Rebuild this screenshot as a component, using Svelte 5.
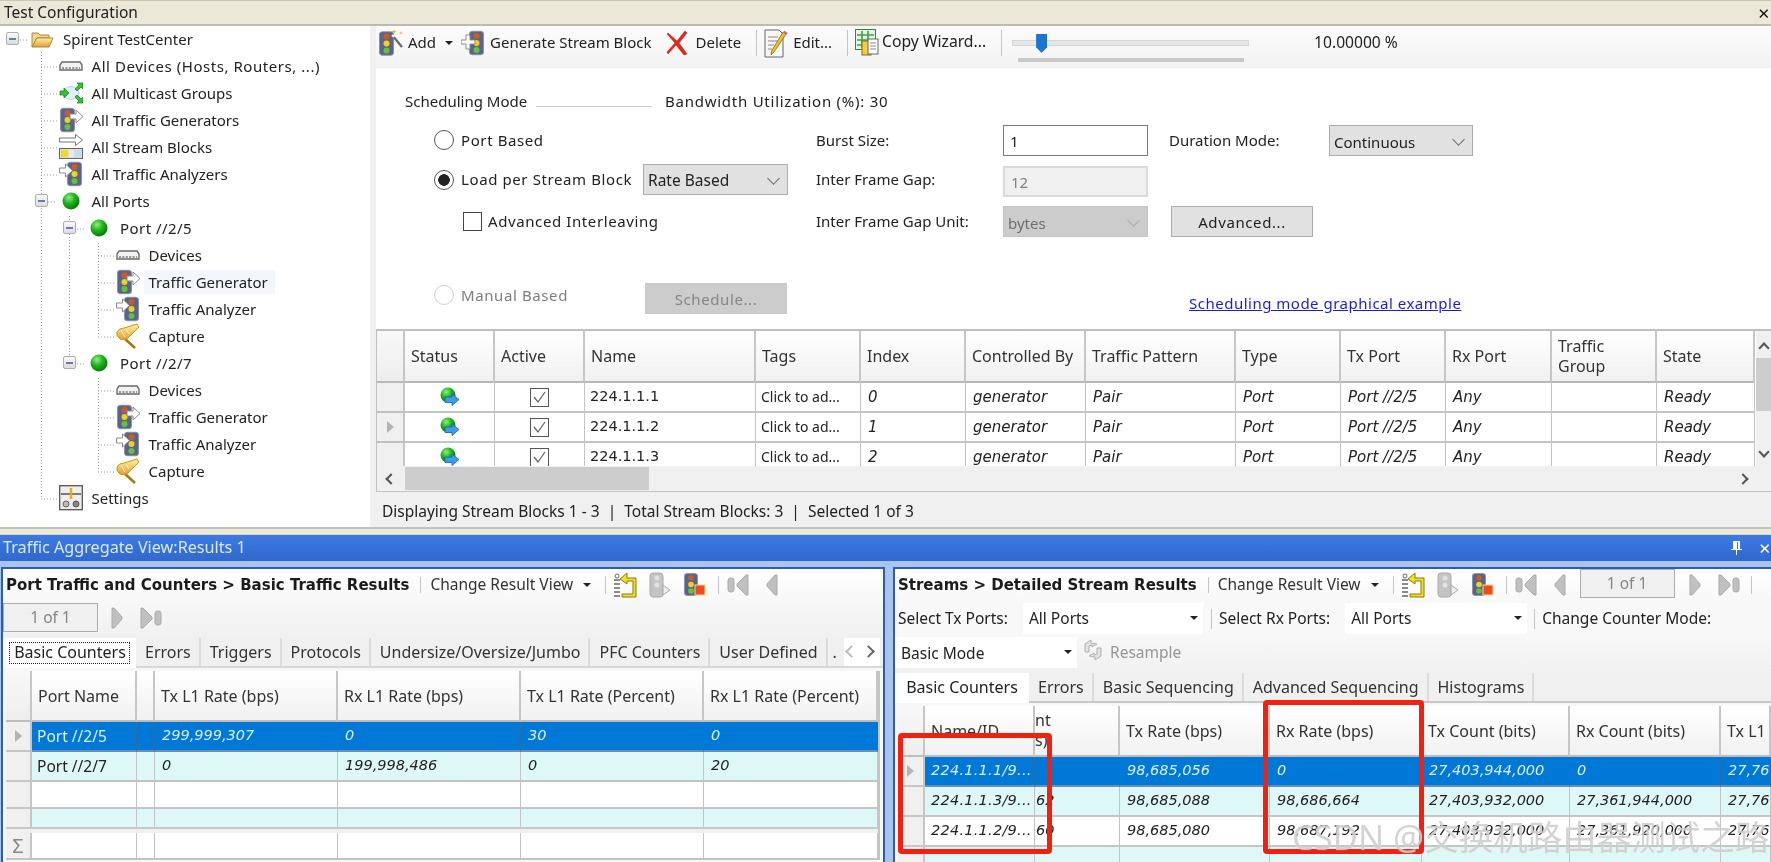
<script>
  const tree = [
    { l: 0, t: 'Spirent TestCenter', i: 'folder', x: true },
    { l: 1, t: 'All Devices (Hosts, Routers, ...)', i: 'device', wide: true },
    { l: 1, t: 'All Multicast Groups', i: 'multicast' },
    { l: 1, t: 'All Traffic Generators', i: 'gen' },
    { l: 1, t: 'All Stream Blocks', i: 'stream' },
    { l: 1, t: 'All Traffic Analyzers', i: 'ana' },
    { l: 1, t: 'All Ports', i: 'ball', x: true },
    { l: 2, t: 'Port //2/5', i: 'ball', x: true, port: true },
    { l: 3, t: 'Devices', i: 'device' },
    { l: 3, t: 'Traffic Generator', i: 'gen', hover: true },
    { l: 3, t: 'Traffic Analyzer', i: 'ana' },
    { l: 3, t: 'Capture', i: 'capture' },
    { l: 2, t: 'Port //2/7', i: 'ball', x: true, port: true },
    { l: 3, t: 'Devices', i: 'device' },
    { l: 3, t: 'Traffic Generator', i: 'gen' },
    { l: 3, t: 'Traffic Analyzer', i: 'ana' },
    { l: 3, t: 'Capture', i: 'capture' },
    { l: 1, t: 'Settings', i: 'settings' }
  ];
  const rowCenter = (n) => 13.5 + 27 * n;
  const hLines = [[41, 58, 1], [41, 58, 2], [41, 58, 3], [41, 58, 4], [41, 58, 5], [41, 58, 17],
    [98, 115, 8], [98, 115, 9], [98, 115, 10], [98, 115, 11], [98, 115, 13], [98, 115, 14], [98, 115, 15], [98, 115, 16]];
  const vLines = [[41, 26, rowCenter(17)], [69, 187, 338], [98, 214, rowCenter(11)], [98, 349, rowCenter(16)]];

  const blocks = [
    ['224.1.1.1', '0', false],
    ['224.1.1.2', '1', true],
    ['224.1.1.3', '2', false]
  ];
  const topHeads = ['Status', 'Active', 'Name', 'Tags', 'Index', 'Controlled By', 'Traffic Pattern', 'Type', 'Tx Port', 'Rx Port', 'Traffic Group', 'State'];

  const leftHeads = ['Port Name', '', 'Tx L1 Rate (bps)', 'Rx L1 Rate (bps)', 'Tx L1 Rate (Percent)', 'Rx L1 Rate (Percent)'];
  const leftRows = [
    { c: ['Port //2/5', '', '299,999,307', '0', '30', '0'], k: 'sel' },
    { c: ['Port //2/7', '', '0', '199,998,486', '0', '20'], k: 'alt' },
    { c: ['', '', '', '', '', ''], k: 'plain short' },
    { c: ['', '', '', '', '', ''], k: 'alt clip' }
  ];
  const rightHeads = ['Name/ID', '', 'Tx Rate (bps)', 'Rx Rate (bps)', 'Tx Count (bits)', 'Rx Count (bits)', 'Tx L1'];
  const rightRows = [
    { c: ['224.1.1.1/9...', '', '98,685,056', '0', '27,403,944,000', '0', '27,76'], k: 'sel' },
    { c: ['224.1.1.3/9...', '62', '98,685,088', '98,686,664', '27,403,932,000', '27,361,944,000', '27,76'], k: 'alt' },
    { c: ['224.1.1.2/9...', '60', '98,685,080', '98,687,192', '27,403,932,000', '27,361,920,000', '27,76'], k: 'plain' },
    { c: ['', '', '', '', '', '', ''], k: 'alt clip' }
  ];
  const leftTabs = ['Errors', 'Triggers', 'Protocols', 'Undersize/Oversize/Jumbo', 'PFC Counters', 'User Defined'];
  const rightTabs = ['Errors', 'Basic Sequencing', 'Advanced Sequencing', 'Histograms'];
</script>

{#snippet ic(name, w, h)}
  <svg class="ic" width={w} height={h}><use href={'#' + name} /></svg>
{/snippet}

{#snippet expander()}
  <span class="exp"><span></span></span>
{/snippet}

{#snippet resultIcons()}
  {@render ic('back', 25, 26)}
  <span class="g11"></span>
  {@render ic('grayblock', 22, 26)}
  <span class="g13"></span>
  {@render ic('genstop', 22, 26)}
  <span class="sep s12"></span>
  {@render ic('first', 22, 22)}
  <span class="g17"></span>
  {@render ic('prev', 13, 22)}
{/snippet}

{#snippet nextIcons()}
  {@render ic('next', 13, 22)}
  <span class="g17"></span>
  {@render ic('last', 22, 22)}
{/snippet}

<svg class="defs" aria-hidden="true">
  <defs>
    <radialGradient id="gb" cx="38%" cy="30%" r="70%">
      <stop offset="0" stop-color="#8ff07a" /><stop offset=".5" stop-color="#1fb51f" /><stop offset="1" stop-color="#067a06" />
    </radialGradient>
    <linearGradient id="gy" x1="0" y1="0" x2="0" y2="1">
      <stop offset="0" stop-color="#fff0a8" /><stop offset="1" stop-color="#e0a030" />
    </linearGradient>
    <symbol id="folder" viewBox="0 0 24 20">
      <path d="M2 4h6l2 2h9v3H7L2 18z" fill="#f0d68a" stroke="#b08a3a" />
      <path d="M2 18 7 9h16l-4 9z" fill="url(#gy)" stroke="#b08a3a" />
    </symbol>
    <symbol id="device" viewBox="0 0 24 26">
      <path d="M3 9h18l2 3v5H1v-5z" fill="#f2f2f2" stroke="#6b6b6b" stroke-width="1.4" />
      <path d="M3 15h18" stroke="#777" stroke-width="1.6" stroke-dasharray="2 1.4" />
    </symbol>
    <symbol id="multicast" viewBox="0 0 24 26">
      <ellipse cx="12" cy="13" rx="8" ry="6.5" fill="#e4edf6" stroke="#c0cfe0" />
      <path d="M1 11h4V8l5 5-5 5v-3H1zM16 9l4-4-2-2h6v6l-2-2-4 4zM16 17l4 4-2 2h6v-6l-2 2-4-4z" fill="#35c035" stroke="#157a15" stroke-width=".7" />
    </symbol>
    <symbol id="lamp" viewBox="0 0 16 26">
      <rect x=".5" y=".5" width="15" height="25" rx="3" fill="#5a648a" stroke="#8a8fa8" />
      <circle cx="8" cy="5.5" r="3.2" fill="#cc5a22" />
      <circle cx="8" cy="13" r="3.2" fill="#efd21c" />
      <circle cx="8" cy="20.5" r="3.2" fill="#63c23c" />
    </symbol>
    <symbol id="gen" viewBox="0 0 24 26">
      <use href="#lamp" x="1" width="15" height="26" />
      <path d="M11 7h6V3l7 6.5-7 6.5v-4h-6z" fill="#fff" stroke="#8a8a8a" />
    </symbol>
    <symbol id="ana" viewBox="0 0 24 26">
      <use href="#lamp" x="8" width="15" height="26" />
      <path d="M.5 7h6V3l7 6.5-7 6.5v-4h-6z" fill="#fff" stroke="#8a8a8a" />
    </symbol>
    <symbol id="stream" viewBox="0 0 24 26">
      <path d="M.5 4h16V.5L23.5 6l-7 5.5V8H.5z" fill="#fff" stroke="#777" />
      <rect x=".5" y="14.5" width="23" height="10" fill="#ddd" stroke="#666" />
      <rect x="2" y="16" width="7" height="7" fill="#f3dc10" />
      <rect x="10" y="16" width="5" height="7" fill="#e9e9e9" />
      <rect x="16" y="16" width="6" height="7" fill="#bfe1f5" />
    </symbol>
    <symbol id="ball" viewBox="0 0 24 26">
      <circle cx="12" cy="13" r="8.5" fill="url(#gb)" />
    </symbol>
    <symbol id="capture" viewBox="0 0 24 26">
      <path d="M8 15 19 25" stroke="#a57a10" stroke-width="2.6" />
      <path d="M21 1 23 4 12 15Q8 18 4 16 0 13 1 9 3 5 8 5Z" fill="url(#gy)" stroke="#c69a10" />
      <path d="M5 7l4 7M10 6l3 5" stroke="#fff6b8" />
    </symbol>
    <symbol id="settings" viewBox="0 0 24 26">
      <rect x=".7" y=".7" width="22.6" height="24" fill="#eee" stroke="#555" stroke-width="1.3" />
      <path d="M2 9h20" stroke="#555" stroke-width="1.5" /><path d="M12 3v11" stroke="#e6ac10" stroke-width="2.5" />
      <circle cx="7" cy="19" r="3" fill="#bbb" stroke="#666" /><circle cx="17" cy="19" r="3" fill="#888" stroke="#555" />
    </symbol>
    <symbol id="add" viewBox="0 0 24 30">
      <use href="#lamp" y="3" width="15" height="25" />
      <path d="M13 7 23 19" stroke="#666" stroke-width="2.2" /><path d="M13 7l2 2" stroke="#fff" stroke-width="2" />
      <path d="M15 1l.7 2 2 .7-2 .7-.7 2-.7-2-2-.7 2-.7zM22 3l.5 1.4 1.5.5-1.5.5-.5 1.4-.5-1.4-1.5-.5 1.5-.5z" fill="#e7b60e" />
    </symbol>
    <symbol id="gensb" viewBox="0 0 24 30">
      <use href="#lamp" x="8" y="2" width="15" height="26" />
      <path d="M0 12h5V7h4v5h5v4H9v5H5v-5H0z" fill="#fff" stroke="#8a8a8a" />
    </symbol>
    <symbol id="del" viewBox="0 0 22 26">
      <path d="M2 3 11 11 19 1l2 2-8 10 8 11-3 1-8-10-8 9-1-2 8-9-8-9z" fill="#e0281a" stroke="#b01a10" stroke-width=".5" />
    </symbol>
    <symbol id="edit" viewBox="0 0 24 30">
      <path d="M1 2h14l4 4v23H1z" fill="#f7f7f7" stroke="#666" />
      <path d="M4 9h10M4 13h10M4 17h6M4 21h4" stroke="#888" />
      <path d="M22 6 10 24l-3 3 .6-4L19 4z" fill="#f3c020" stroke="#8a6a10" stroke-width=".8" />
      <path d="M20 3.5l3 2.5" stroke="#d257a0" stroke-width="2" />
    </symbol>
    <symbol id="copy" viewBox="0 0 24 30">
      <rect x=".5" y="1.500" width="20" height="20" fill="#e8f5e6" stroke="#2b8a33" />
      <path d="M2 7h17M2 12h17M2 17h17M7 3v17M13 3v17" stroke="#3aa045" stroke-width="1.6" />
      <rect x="7" y="13" width="9" height="14" fill="#f0cf46" stroke="#8a6a10" />
      <rect x="13" y="11" width="10" height="15" fill="#fff" stroke="#666" />
      <path d="M15 15h6M15 18h6M15 21h6" stroke="#888" />
    </symbol>
    <symbol id="status" viewBox="0 0 22 20">
      <circle cx="9" cy="8" r="7.5" fill="url(#gb)" />
      <path d="M6 10h7V7l7 5.500-7 6v-3H6z" fill="#3d9de8" stroke="#1860a8" stroke-width=".8" />
    </symbol>
    <symbol id="back" viewBox="0 0 25 26">
      <path d="M1 8h6M1 12h6M1 16h6M1 20h6M1 24h6" stroke="#666" stroke-width="1.4" />
      <circle cx="4" cy="4" r="2" fill="#fff" stroke="#666" />
      <path d="M14 1 7 7l7 5V9h6v13H9v3h14V6h-9z" fill="#f3de22" stroke="#8a7a10" />
    </symbol>
    <symbol id="grayblock" viewBox="0 0 22 26">
      <rect x="1" y="1" width="13" height="24" rx="3" fill="#c4c4c4" stroke="#aaa" />
      <circle cx="8" cy="6" r="2.500" fill="#e2e2e2" /><circle cx="8" cy="13" r="2.500" fill="#e2e2e2" />
      <path d="M14 13 21 18l-7 5z" fill="#eee" stroke="#aaa" />
    </symbol>
    <symbol id="genstop" viewBox="0 0 22 26">
      <use href="#lamp" width="14" height="25" />
      <rect x="11" y="13" width="10" height="10" fill="#ee4a1c" stroke="#f0dc90" />
    </symbol>
    <symbol id="next" viewBox="0 0 13 22">
      <path d="M2 1h2l8 9v2l-8 9H2z" fill="#c0c0c0" stroke="#aaa" />
    </symbol>
    <symbol id="prev" viewBox="0 0 13 22">
      <path d="M11 1H9l-8 9v2l8 9h2z" fill="#c0c0c0" stroke="#aaa" />
    </symbol>
    <symbol id="last" viewBox="0 0 22 22">
      <path d="M1 1h2l9 9v2l-9 9H1z" fill="#c0c0c0" stroke="#aaa" /><rect x="15" y="4" width="6" height="14" rx="2.500" fill="#c0c0c0" stroke="#aaa" />
    </symbol>
    <symbol id="first" viewBox="0 0 22 22">
      <path d="M21 1h-2l-9 9v2l9 9h2z" fill="#c0c0c0" stroke="#aaa" /><rect x="1" y="4" width="6" height="14" rx="2.500" fill="#c0c0c0" stroke="#aaa" />
    </symbol>
    <symbol id="resample" viewBox="0 0 22 26">
      <path d="M3 15V7l6-4v3l6 1-5 3v-2l-3 1v6zM19 11v8l-6 4v-3l-6-1 5-3v2l3-1v-6z" fill="#e2e2e2" stroke="#b0b0b0" />
    </symbol>
  </defs>
</svg>

<div class="root">
  <header class="titlebar"><span>Test Configuration</span><span class="closex">✕</span></header>

  <section class="top">
    <nav class="tree">
      <svg class="wires" width="370" height="501">
        {#each vLines as [x, a, b]}
          <line x1={x + .5} x2={x + .5} y1={a} y2={b} />
        {/each}
        {#each hLines as [a, b, n]}
          <line x1={a} x2={b} y1={rowCenter(n) + .5} y2={rowCenter(n) + .5} />
        {/each}
        <line x1="20" x2="29" y1="14" y2="14" />
        <line x1="48" x2="57" y1="176" y2="176" />
        <line x1="77" x2="86" y1="203" y2="203" />
        <line x1="77" x2="86" y1="338" y2="338" />
      </svg>
      <div class="nodes">
        {#each tree as n}
          <div class="node" style={`padding-left:${6 + n.l * 28.5}px`}>
            <span class="slot">{#if n.x}{@render expander()}{/if}</span>
            <span class="nicon">{@render ic(n.i, 24, 26)}</span>
            <span class="ntext" class:hover={n.hover} class:wide={n.wide} class:port={n.port}>{n.t}</span>
          </div>
        {/each}
      </div>
    </nav>

    <div class="config">
      <div class="toolbar">
        <span class="tool add">{@render ic('add', 24, 30)}<span>Add</span></span>
        <span class="caret c1"></span>
        <span class="tool gens">{@render ic('gensb', 24, 30)}<span>Generate Stream Block</span></span>
        <span class="tool dele">{@render ic('del', 22, 26)}<span>Delete</span></span>
        <span class="sep tall"></span>
        <span class="tool">{@render ic('edit', 24, 30)}<span>Edit...</span></span>
        <span class="sep tall"></span>
        <span class="tool">{@render ic('copy', 24, 30)}<span class="cw">Copy Wizard...</span></span>
        <span class="sep tall"></span>
        <div class="slider">
          <div class="track"><span class="thumb"></span></div>
          <div class="slbar"></div>
        </div>
        <span class="pct">10.00000 %</span>
      </div>

      <div class="form">
        <div class="schedhead">
          <span class="sm">Scheduling Mode</span>
          <span class="schedline"></span>
          <span class="bw">Bandwidth Utilization (%): 30</span>
        </div>
        <div class="formgrid">
          <span class="radio g1"></span><span class="lbl c2 g1 wide">Port Based</span>
          <span class="lbl c5 g1">Burst Size:</span>
          <span class="input strong g1">1</span>
          <span class="lbl c8 g1">Duration Mode:</span>
          <span class="select c9 g1">Continuous<i class="chev"></i></span>

          <span class="radio on r2 g2"></span><span class="lbl c2 r2 g2 wide">Load per Stream Block</span>
          <span class="select c3 r2 g2 rb">Rate Based<i class="chev"></i></span>
          <span class="lbl c5 r2 g2">Inter Frame Gap:</span>
          <span class="input dim g2">12</span>

          <span class="check g3"></span><span class="lbl ai g3 wide">Advanced Interleaving</span>
          <span class="lbl c5 g3">Inter Frame Gap Unit:</span>
          <span class="select off c6 g3">bytes<i class="chev"></i></span>
          <span class="btn advb g3">Advanced...</span>

          <span class="radio off r4 g4"></span><span class="lbl c2 r4 g4 gray wide">Manual Based</span>
          <span class="btn off sched g4">Schedule...</span>
          <a class="link g4" href="#top">Scheduling mode graphical example</a>
        </div>
      </div>

      <div class="blocks">
        <div class="blockmain">
          <div class="tgrid">
            <div class="th rh"></div>
            {#each topHeads as h}<div class="th"><span class={h === 'Traffic Group' ? 'wrap' : ''}>{h}</span></div>{/each}
            {#each blocks as [name, idx, cur]}
              <div class="rh td">{#if cur}<i class="tri"></i>{/if}</div>
              <div class="td ctr">{@render ic('status', 22, 20)}</div>
              <div class="td ctr"><span class="cb"><svg width="15" height="15"><path d="M2 7l4 5 7-10" fill="none" stroke="#666" stroke-width="1.300" /></svg></span></div>
              <div class="td nm">{name}</div>
              <div class="td tg">Click to ad...</div>
              <div class="td it">{idx}</div>
              <div class="td it">generator</div>
              <div class="td it">Pair</div>
              <div class="td it">Port</div>
              <div class="td it">Port //2/5</div>
              <div class="td it">Any</div>
              <div class="td"></div>
              <div class="td it">Ready</div>
            {/each}
          </div>
          <div class="vscroll"><i class="arr up"></i><span class="vthumb"></span><i class="arr down"></i></div>
        </div>
        <div class="hscroll"><i class="arr left"></i><span class="hthumb"></span><i class="arr right"></i></div>
      </div>

      <div class="statusbar">Displaying Stream Blocks 1 - 3&nbsp;&nbsp;|&nbsp;&nbsp;Total Stream Blocks: 3&nbsp;&nbsp;|&nbsp;&nbsp;Selected 1 of 3</div>
    </div>
  </section>

  <div class="splitter"></div>

  <section class="results">
    <div class="restitle">
      <span>Traffic Aggregate View:Results 1</span>
      <span class="pin"><svg width="12" height="16"><path d="M3 1h7v8h2v1H7v5H6v-5H1V9h2zM7 2v7h1V2z" fill="#fff" /></svg></span>
      <span class="resx">✕</span>
    </div>
    <div class="resbody">
      <div class="panel lp">
        <div class="line l1">
          <b class="ptitle">Port Traffic and Counters &gt; Basic Traffic Results</b>
          <span class="sep s1"></span>
          <span class="crv">Change Result View</span>
          <span class="caret c2d"></span>
          <span class="sep s2"></span>
          {@render resultIcons()}
        </div>
        <div class="line l2">
          <span class="pager">1 of 1</span>
          <span class="g12"></span>
          {@render nextIcons()}
        </div>
        <div class="tabs">
          <span class="tab active"><span class="focus">Basic Counters</span></span>
          {#each leftTabs as t}<span class="tab">{t}</span>{/each}
          <span class="tab more">.</span>
          <span class="tabnav"><i class="ch-l"></i><i class="ch-r"></i></span>
        </div>
        <div class="resgrid rgl">
          <div class="th rh"></div>
          {#each leftHeads as h}<div class="th">{h}</div>{/each}
          {#each leftRows as r}
            <div class={'rh td ' + r.k}>{#if r.k === 'sel'}<i class="tri"></i>{/if}</div>
            {#each r.c as c, i}<div class={'td ' + r.k} class:it={i > 0} class:pn={i === 0}>{c}</div>{/each}
          {/each}
          <div class="gridgap"></div>
          <div class="rh td sum">Σ</div>
          {#each leftHeads as _}<div class="td sum"></div>{/each}
        </div>
      </div>

      <div class="panel rp">
        <div class="line l1">
          <b class="ptitle t2">Streams &gt; Detailed Stream Results</b>
          <span class="sep s1"></span>
          <span class="crv">Change Result View</span>
          <span class="caret c2d"></span>
          <span class="sep s2"></span>
          {@render resultIcons()}
          <span class="pager p2">1 of 1</span>
          {@render nextIcons()}
          <span class="sep s3"></span>
        </div>
        <div class="line l3">
          <span class="sl">Select Tx Ports:</span>
          <span class="combo cb1">All Ports<i class="caret"></i></span>
          <span class="sep s4"></span>
          <span class="sl">Select Rx Ports:</span>
          <span class="combo cb2">All Ports<i class="caret"></i></span>
          <span class="sep s5"></span>
          <span>Change Counter Mode:</span>
        </div>
        <div class="line l4">
          <span class="combo cb3">Basic Mode<i class="caret"></i></span>
          {@render ic('resample', 22, 26)}
          <span class="resample">Resample</span>
        </div>
        <div class="tabs tabs2">
          <span class="tab active">Basic Counters</span>
          {#each rightTabs as t}<span class="tab">{t}</span>{/each}
        </div>
        <div class="resgrid rgr">
          <div class="th rh"></div>
          {#each rightHeads as h, i}
            <div class="th" class:clipc={i === 1}>{#if i === 1}<span>nt<br />s)</span>{:else}{h}{/if}</div>
          {/each}
          {#each rightRows as r}
            <div class={'rh td ' + r.k}>{#if r.k === 'sel'}<i class="tri"></i>{/if}</div>
            {#each r.c as c, i}<div class={'td it ' + r.k} class:tight={i === 1} class:idcol={i === 0}>{c}</div>{/each}
          {/each}
        </div>
      </div>
    </div>
  </section>

  <div class="redbox rb1"></div>
  <div class="redbox rb2"></div>
  <div class="mark">CSDN @交换机路由器测试之路</div>
</div>

<style>
  :global(body) { margin: 0; background: #fff; }
  .defs { position: absolute; width: 0; height: 0; }
  .root {
    position: relative; width: 1771px; height: 862px; overflow: hidden;
    display: flex; flex-direction: column; background: #fff; color: #222;
    font-family: "Noto Sans", "DejaVu Sans", sans-serif; font-size: 15px; line-height: 1.2;
    filter: blur(.35px);
  }
  .ic { display: block; flex: none; overflow: visible; }
  .titlebar {
    height: 26px; box-sizing: border-box; flex: none; padding: 0 0 0 4px;
    display: flex; align-items: center; justify-content: space-between;
    background: #ebe8d8; border-top: 1px solid #c9c7b6; border-bottom: 2px solid #bdbbab; font-size: 15.5px;
  }
  .closex { margin-right: 1px; font-size: 15px; color: #111; }

  .top { flex: none; height: 501px; display: flex; }
  .tree { position: relative; width: 370px; flex: none; background: #fff; }
  .wires { position: absolute; left: 0; top: 0; }
  .wires line { stroke: #9a9a9a; stroke-width: 1; stroke-dasharray: 1 2; }
  .nodes { position: relative; margin-top: -1px; }
  .node { height: 27px; display: flex; align-items: center; box-sizing: border-box; }
  .slot { width: 24px; flex: none; display: flex; }
  .exp {
    width: 13px; height: 13px; box-sizing: border-box; border: 1px solid #aeaeae; border-radius: 2px;
    background: linear-gradient(#fafafa, #dcdcdc); display: flex; align-items: center; justify-content: center;
  }
  .exp span { width: 7px; height: 2px; background: #6a7ab0; }
  .nicon { width: 26px; flex: none; display: flex; background: #fff; }
  .ntext { margin-left: 7px; padding: 3px 8px 3px 0; }
  .ntext.wide { letter-spacing: .55px; }
  .ntext.port { letter-spacing: .45px; }
  .ntext.hover { background: #f3f7fb; padding-right: 7px; margin-left: 2px; padding-left: 5px; }

  .config { flex: 1; min-width: 0; display: flex; flex-direction: column; background: #f0f0f0; padding-left: 6px; }
  .toolbar {
    height: 41px; flex: none; margin-bottom: 1px; display: flex; align-items: center; padding: 0 0 8px 3px; box-sizing: border-box;
    background: linear-gradient(#fbfbfb, #f3f3f3); font-size: 15px;
  }
  .tool { display: flex; align-items: center; gap: 5px; flex: none; }
  .tool span { margin-top: -2px; }
  .caret { display: inline-block; width: 0; height: 0; border: 4px solid transparent; border-top-color: #222; border-bottom: 0; flex: none; }
  .c1 { margin: 0 8px 0 9px; }
  .gens { margin-right: 14px; }
  .dele { gap: 8px; }
  .sep { width: 1px; background: #c4c4c4; flex: none; display: inline-block; }
  .sep.tall { height: 26px; margin: 0 7px 0 15px; }
  .cw { margin-left: -2px; font-size: 15.7px; }
  .slider { width: 237px; margin: 12px 0 0 3px; flex: none; display: flex; flex-direction: column; }
  .track { position: relative; height: 6px; background: #e6e6e6; border: 1px solid #d6d6d6; box-sizing: border-box; }
  .thumb {
    position: absolute; left: 23px; top: -7px; width: 11px; height: 19px; background: #1c74d0;
    clip-path: polygon(0 0, 100% 0, 100% 70%, 50% 100%, 0 70%);
  }
  .slbar { height: 4px; background: #c8c8c8; margin: 12px 5px -5px 6px; }
  .pct { margin-left: 65px; font-size: 15.6px; margin-top: -1px; }

  .form { height: 261px; flex: none; background: #fff; box-sizing: border-box; padding-top: 23px; }
  .schedhead { display: flex; align-items: center; height: 20px; padding-left: 29px; }
  .sm { width: 131px; }
  .schedline { width: 116px; height: 1px; background: #cfcfcf; margin: 11px 13px 0 0; }
  .bw { letter-spacing: .75px; }
  .formgrid {
    display: grid; padding: 14px 0 0 58px; align-items: start;
    grid-template-columns: 27px 182px 145px 28px 187px 145px 21px 160px 144px;
    grid-template-rows: 41px 40px 77px 42px;
  }
  .g1 { grid-row: 1; }
  .g2 { grid-row: 2; }
  .g3 { grid-row: 3; }
  .g4 { grid-row: 4; }
  .lbl { height: 29px; display: flex; align-items: center; white-space: nowrap; }
  .lbl.r2 { height: 25px; }
  .lbl.r4 { height: 23px; }
  .wide { letter-spacing: .6px; }
  .c2 { grid-column: 2; }
  .c3 { grid-column: 3; }
  .c5 { grid-column: 5; }
  .c6 { grid-column: 6; }
  .c8 { grid-column: 8; }
  .c9 { grid-column: 9; }
  .gray { color: #7d7d7d; }
  .radio {
    grid-column: 1; width: 20px; height: 20px; margin-top: 5px; box-sizing: border-box;
    border: 1.5px solid #555; border-radius: 50%; background: #fff; display: block;
  }
  .radio.r2 { margin-top: 4px; }
  .radio.on { background: radial-gradient(circle, #222 0 5.5px, #fff 6px); }
  .radio.off { border-color: #d0d0d0; margin-top: 2px; }
  .check { grid-column: 1 / 3; width: 19px; height: 19px; margin: 6px 0 0 29px; box-sizing: border-box; border: 1.5px solid #444; display: block; }
  .ai { grid-column: 2 / 4; margin-left: 27px; }
  .input {
    grid-column: 6; height: 31px; box-sizing: border-box; padding-left: 6px; display: flex; align-items: center;
    border: 1.5px solid #7c7c7c; background: #fff;
  }
  .input.dim { background: #f0f0f0; border: 2px solid #dadada; color: #7f7f7f; }
  .select {
    position: relative; height: 31px; box-sizing: border-box; padding-left: 4px; display: flex; align-items: center;
    background: #e1e1e1; border: 1.5px solid #adadad; padding-top: 2px;
  }
  .select.r2 { margin-top: -2px; }
  .rb { font-size: 15.5px; }
  .select.off { background: #cccccc; border-color: #c4c4c4; color: #6f6f6f; padding-left: 4px; }
  .chev { position: absolute; right: 9px; top: 9px; width: 8px; height: 8px; border: solid #666; border-width: 0 1.4px 1.4px 0; transform: rotate(45deg); }
  .select.off .chev { border-color: #aaa; }
  .btn { height: 31px; box-sizing: border-box; display: flex; align-items: center; justify-content: center; background: #e1e1e1; border: 1.5px solid #adadad; letter-spacing: .6px; }
  .btn.off { background: #cccccc; border-color: #c8c8c8; color: #858585; }
  .advb { grid-column: 8; margin-left: 2px; width: 142px; }
  .sched { grid-column: 3; width: 142px; margin-left: 2px; }
  .link { grid-column: 7 / -1; margin: 11px 0 0 41px; color: #1a1ae6; text-decoration: underline; white-space: nowrap; letter-spacing: .5px; }

  .blocks { flex: none; height: 163px; border-top: 2px solid #c0c0c0; border-left: 1px solid #c0c0c0; box-sizing: border-box; display: flex; flex-direction: column; background: #fff; }
  .blockmain { display: flex; height: 135px; flex: none; }
  .tgrid {
    width: 1379px; flex: none; height: 135px; overflow: hidden; display: grid; align-content: start;
    grid-template-columns: 28px 90px 90px 171px 105px 105px 120px 150px 105px 105px 106px 105px 98px;
    grid-template-rows: 52px 30px 30px 30px;
  }
  .th {
    box-sizing: border-box; display: flex; align-items: center; padding: 2px 6px 0; background: linear-gradient(#fff, #f1f1f1);
    border-right: 2px solid #c6c6c6; border-bottom: 2px solid #b8b8b8; color: #333; overflow: hidden; white-space: nowrap; font-size: 16px;
  }
  .th .wrap { white-space: normal; line-height: 20px; width: 60px; margin-top: -2px; }
  .th.rh { background: linear-gradient(#f8f8f8, #eee); padding: 0; }
  .td {
    box-sizing: border-box; display: flex; align-items: center; padding: 0 5px; background: #fff; white-space: nowrap; overflow: hidden;
    border-right: 1px solid #c4c4c4; border-bottom: 2px solid #c4c4c4; font-size: 14.5px; color: #222;
  }
  .td.rh { background: #f0f0f0; padding: 0; border-right: 2px solid #c6c6c6; border-bottom: 2px solid #c0c0c0; justify-content: center; }
  .td.ctr { justify-content: center; }
  .nm { font-family: "DejaVu Sans", sans-serif; }
  .tg { font-size: 14px; }
  .it { font-family: "DejaVu Sans", sans-serif; font-style: italic; font-size: 15px; padding-left: 7px; }
  .pn { font-size: 15.5px !important; }
  .cb { width: 19px; height: 19px; box-sizing: border-box; border: 1.5px solid #555; display: flex; align-items: center; justify-content: center; background: #fff; }
  .tri { width: 0; height: 0; border: 6px solid transparent; border-left: 7px solid #b4b4b4; border-right: 0; display: block; }
  .vscroll { position: relative; width: 16px; flex: none; background: #f0f0f0; }
  .vthumb { position: absolute; left: 0; right: 0; top: 27px; height: 53px; background: #cdcdcd; }
  .arr { position: absolute; width: 6px; height: 6px; border: solid #555; border-width: 2px 0 0 2px; }
  .arr.up { left: 4px; top: 13px; transform: rotate(45deg); }
  .arr.down { left: 4px; bottom: 10px; transform: rotate(225deg); }
  .arr.left { left: 10px; top: 9px; transform: rotate(-45deg); }
  .arr.right { right: 24px; top: 9px; transform: rotate(135deg); }
  .hscroll { position: relative; flex: none; height: 26px; background: #f0f0f0; border-bottom: 1px solid #c4c4c4; box-sizing: border-box; }
  .hthumb { position: absolute; left: 28px; top: 1px; width: 244px; height: 23px; background: #cdcdcd; }
  .statusbar { flex: 1; display: flex; align-items: center; padding: 3px 0 0 6px; background: #f0f0f0; font-size: 15.5px; }

  .splitter { height: 8px; flex: none; background: #eceadb; border-top: 2px solid #c4c2b2; border-bottom: 1px solid #d8d6c6; box-sizing: border-box; }

  .results { flex: 1; min-height: 0; display: flex; flex-direction: column; }
  .restitle {
    height: 26px; flex: none; display: flex; align-items: center; padding-left: 3px; color: #dbe8fb; font-size: 16.2px;
    background: linear-gradient(#3b7ae4, #3168cc);
  }
  .pin { margin-left: auto; margin-right: 16px; display: flex; }
  .resx { color: #fff; margin-right: 0; font-size: 15px; }
  .resbody { flex: 1; min-height: 0; display: flex; background: #a9c4ee; padding: 6px 0 0 1px; gap: 8px; }
  .panel { background: #f7f7f7; border: solid #2d5cb0; border-width: 2px 2px 0 2px; overflow: hidden; box-sizing: border-box; flex: none; font-size: 15.5px; }
  .lp { width: 884px; }
  .rp { width: 878px; border-right: 0; }
  .line { display: flex; align-items: center; white-space: nowrap; }
  .l1 { height: 31px; padding-left: 3px; background: linear-gradient(#fff, #f8f8f8); }
  .ptitle { font-family: "DejaVu Sans", sans-serif; font-size: 15px; font-weight: 700; color: #1b1b1b; }
  .crv { color: #333; }
  .s1 { height: 16px; margin: 0 9px 0 11px; }
  .s2 { height: 18px; margin: 0 7px 0 14px; }
  .c2d { margin-left: 10px; }
  .s12 { height: 18px; margin: 0 8px 0 12px; }
  .s3 { height: 18px; margin-left: 11px; }
  .g11 { width: 11px; flex: none; }
  .g12 { width: 12px; flex: none; }
  .g13 { width: 13px; flex: none; }
  .g17 { width: 17px; flex: none; }
  .l2 { height: 38px; align-items: flex-start; padding-top: 3px; box-sizing: border-box; background: linear-gradient(#f8f8f8, #f0f0f0); }
  .l2 .ic { margin-top: 4px; }
  .pager { width: 95px; height: 29px; box-sizing: border-box; border: 1.5px solid #adadad; background: #f0f0f0; color: #858585; display: flex; align-items: center; justify-content: center; flex: none; }
  .p2 { margin: -3px 13px 0 13px; }
  .tabs { position: relative; height: 30px; display: flex; align-items: stretch; background: #f0f0f0; border-bottom: 2px solid #d8d8d8; box-sizing: border-box; white-space: nowrap; font-size: 16px; }
  .tab { display: flex; align-items: center; padding: 2px 8px 0 9px; border-right: 2px solid #dcdcdc; color: #333; }
  .tab.active { background: #fff; padding: 0; width: 133px; justify-content: center; border: 0; margin-bottom: -2px; color: #222; }
  .focus { border: 1.5px dotted #222; padding: 0 3px 0 4px; height: 22px; display: flex; align-items: center; box-sizing: border-box; }
  .more { border: 0; padding-left: 5px; }
  .tabnav { position: absolute; right: 3px; top: 0; width: 36px; height: 28px; background: #fff; }
  .ch-l, .ch-r { position: absolute; top: 9px; width: 7px; height: 7px; border: solid #666; border-width: 2px 0 0 2px; }
  .ch-l { left: 3px; transform: rotate(-45deg); border-color: #bbb; }
  .ch-r { right: 7px; transform: rotate(135deg); }
  .resgrid { display: grid; background: #fff; overflow: hidden; }
  .rgl {
    margin-left: 3px; margin-top: 3px; width: 872px; border-right: 2px solid #c4c4c4;
    grid-template-columns: 26px 105px 18px 183px 183px 183px 174px;
    grid-template-rows: 51px 30px 30px 27px 18px 6px 27px;
  }
  .resgrid .th { border-bottom: 2px solid #bdbdbd; }
  .resgrid .td { font-size: 14.5px; }
  .resgrid .td.rh { border-right: 2px solid #c6c6c6; }
  .td.tight { padding-left: 1px; }
  .td.idcol { letter-spacing: .25px; padding-left: 6px; padding-right: 0; }
  .td.sel { background: #0078d7; color: #d9f0ff; border-right-color: #2a6da8; border-bottom-color: #6a8fb0; }
  .td.alt { background: #def7f7; }
  .td.plain { background: #fff; }
  .td.clip { border-bottom: 0; }
  .td.rh.sel, .td.rh.alt, .td.rh.plain, .td.rh.clip, .td.rh.short { background: #f0f0f0; border-color: #c6c6c6; }
  .td.sum { border-bottom: 2px solid #c4c4c4; }
  .td.rh.sum { color: #888; font-size: 20px; }
  .gridgap { grid-column: 1 / -1; background: #f0f0f0; border-top: 2px solid #c8c8c8; box-sizing: border-box; }

  .l3 { height: 37px; padding-left: 3px; background: #f8f8f8; }
  .sl { margin-right: 15px; }
  .combo { position: relative; display: flex; align-items: center; height: 31px; background: #fff; box-sizing: border-box; padding-left: 6px; flex: none; }
  .combo .caret { position: absolute; right: 5px; top: 13px; }
  .cb1 { width: 180px; }
  .cb2 { width: 182px; }
  .s4 { height: 20px; margin: 0 7px 0 8px; }
  .s5 { height: 20px; margin: 0 7px; }
  .l4 { height: 36px; align-items: flex-start; box-sizing: border-box; background: linear-gradient(#f8f8f8, #f0f0f0); }
  .cb3 { width: 182px; margin-right: 5px; padding-top: 2px; }
  .resample { color: #959595; margin-left: 6px; margin-top: 6px; }
  .tabs2 { border-bottom: 2px solid #c8c8c8; }
  .tabs2 .tab.active { width: 134px; }
  .rgr {
    margin-left: 3px; margin-top: 3px;
    grid-template-columns: 27px 110px 85px 150px 152px 148px 151px 50px;
    grid-template-rows: 51px 30px 30px 30px 30px;
  }
  .clipc { padding: 0 !important; line-height: 20px; }
  .clipc span { margin-top: -2px; }

  .redbox { position: absolute; box-sizing: border-box; border: 5px solid #f1200f; border-radius: 4px; }
  .rb1 { left: 898px; top: 733px; width: 154px; height: 121px; }
  .rb2 { left: 1263px; top: 700px; width: 161px; height: 154px; }
  .mark {
    position: absolute; left: 1292px; top: 817px; white-space: nowrap; font-family: "Noto Sans", "Noto Sans CJK SC", sans-serif;
    font-size: 34.5px; line-height: 40px; color: rgba(150,150,150,.42); text-shadow: 0 0 1px rgba(255,255,255,.9);
  }
</style>
